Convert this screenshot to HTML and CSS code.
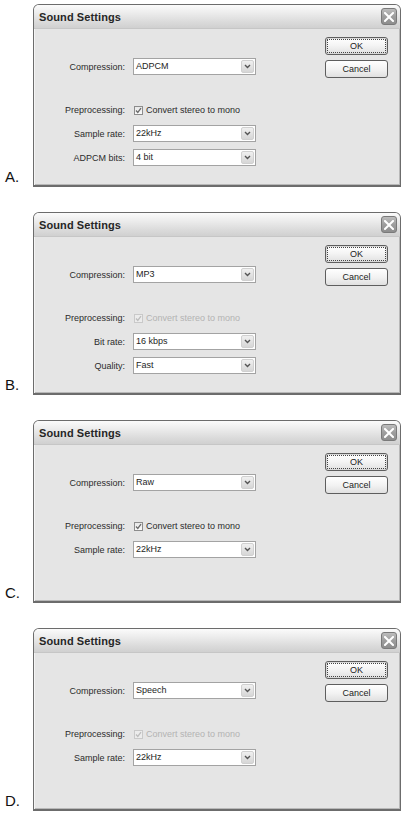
FILE: index.html
```html
<!DOCTYPE html>
<html>
<head>
<meta charset="utf-8">
<link rel="stylesheet" href="styles.css">
</head>
<body>
<div class="page">

  <div class="item">
    <div class="letter">A.</div>
    <div class="dialog">
      <div class="titlebar">
        <span class="title">Sound Settings</span>
        <span class="close"><svg width="10" height="10" viewBox="0 0 10 10"><path d="M1 1L9 9M9 1L1 9" stroke="#fff" stroke-width="2" stroke-linecap="square"/></svg></span>
      </div>
      <div class="body">
        <div class="form">
          <div class="row r1"><span class="lbl">Compression:</span><div class="select"><span class="val">ADPCM</span><span class="arrow"><svg width="7" height="5" viewBox="0 0 7 5"><path d="M1 1L3.5 3.5L6 1" fill="none" stroke="#555" stroke-width="1.4"/></svg></span></div></div>
          <div class="row r2"><span class="lbl">Preprocessing:</span><span class="check"><span class="box"><svg width="7" height="7" viewBox="0 0 7 7"><path d="M1 3.5L2.8 5.5L6 1.2" fill="none" stroke="#6a6a6a" stroke-width="1.3"/></svg></span><span class="ctext">Convert stereo to mono</span></span></div>
          <div class="row r3"><span class="lbl">Sample rate:</span><div class="select"><span class="val">22kHz</span><span class="arrow"><svg width="7" height="5" viewBox="0 0 7 5"><path d="M1 1L3.5 3.5L6 1" fill="none" stroke="#555" stroke-width="1.4"/></svg></span></div></div>
          <div class="row r4"><span class="lbl">ADPCM bits:</span><div class="select"><span class="val">4 bit</span><span class="arrow"><svg width="7" height="5" viewBox="0 0 7 5"><path d="M1 1L3.5 3.5L6 1" fill="none" stroke="#555" stroke-width="1.4"/></svg></span></div></div>
        </div>
        <div class="buttons">
          <span class="btn default">OK</span>
          <span class="btn">Cancel</span>
        </div>
      </div>
    </div>
  </div>

  <div class="item">
    <div class="letter">B.</div>
    <div class="dialog">
      <div class="titlebar">
        <span class="title">Sound Settings</span>
        <span class="close"><svg width="10" height="10" viewBox="0 0 10 10"><path d="M1 1L9 9M9 1L1 9" stroke="#fff" stroke-width="2" stroke-linecap="square"/></svg></span>
      </div>
      <div class="body">
        <div class="form">
          <div class="row r1"><span class="lbl">Compression:</span><div class="select"><span class="val">MP3</span><span class="arrow"><svg width="7" height="5" viewBox="0 0 7 5"><path d="M1 1L3.5 3.5L6 1" fill="none" stroke="#555" stroke-width="1.4"/></svg></span></div></div>
          <div class="row r2"><span class="lbl">Preprocessing:</span><span class="check disabled"><span class="box"><svg width="7" height="7" viewBox="0 0 7 7"><path d="M1 3.5L2.8 5.5L6 1.2" fill="none" stroke="#bdbdbd" stroke-width="1.3"/></svg></span><span class="ctext">Convert stereo to mono</span></span></div>
          <div class="row r3"><span class="lbl">Bit rate:</span><div class="select"><span class="val">16 kbps</span><span class="arrow"><svg width="7" height="5" viewBox="0 0 7 5"><path d="M1 1L3.5 3.5L6 1" fill="none" stroke="#555" stroke-width="1.4"/></svg></span></div></div>
          <div class="row r4"><span class="lbl">Quality:</span><div class="select"><span class="val">Fast</span><span class="arrow"><svg width="7" height="5" viewBox="0 0 7 5"><path d="M1 1L3.5 3.5L6 1" fill="none" stroke="#555" stroke-width="1.4"/></svg></span></div></div>
        </div>
        <div class="buttons">
          <span class="btn default">OK</span>
          <span class="btn">Cancel</span>
        </div>
      </div>
    </div>
  </div>

  <div class="item">
    <div class="letter">C.</div>
    <div class="dialog">
      <div class="titlebar">
        <span class="title">Sound Settings</span>
        <span class="close"><svg width="10" height="10" viewBox="0 0 10 10"><path d="M1 1L9 9M9 1L1 9" stroke="#fff" stroke-width="2" stroke-linecap="square"/></svg></span>
      </div>
      <div class="body">
        <div class="form">
          <div class="row r1"><span class="lbl">Compression:</span><div class="select"><span class="val">Raw</span><span class="arrow"><svg width="7" height="5" viewBox="0 0 7 5"><path d="M1 1L3.5 3.5L6 1" fill="none" stroke="#555" stroke-width="1.4"/></svg></span></div></div>
          <div class="row r2"><span class="lbl">Preprocessing:</span><span class="check"><span class="box"><svg width="7" height="7" viewBox="0 0 7 7"><path d="M1 3.5L2.8 5.5L6 1.2" fill="none" stroke="#6a6a6a" stroke-width="1.3"/></svg></span><span class="ctext">Convert stereo to mono</span></span></div>
          <div class="row r3"><span class="lbl">Sample rate:</span><div class="select"><span class="val">22kHz</span><span class="arrow"><svg width="7" height="5" viewBox="0 0 7 5"><path d="M1 1L3.5 3.5L6 1" fill="none" stroke="#555" stroke-width="1.4"/></svg></span></div></div>
        </div>
        <div class="buttons">
          <span class="btn default">OK</span>
          <span class="btn">Cancel</span>
        </div>
      </div>
    </div>
  </div>

  <div class="item">
    <div class="letter">D.</div>
    <div class="dialog">
      <div class="titlebar">
        <span class="title">Sound Settings</span>
        <span class="close"><svg width="10" height="10" viewBox="0 0 10 10"><path d="M1 1L9 9M9 1L1 9" stroke="#fff" stroke-width="2" stroke-linecap="square"/></svg></span>
      </div>
      <div class="body">
        <div class="form">
          <div class="row r1"><span class="lbl">Compression:</span><div class="select"><span class="val">Speech</span><span class="arrow"><svg width="7" height="5" viewBox="0 0 7 5"><path d="M1 1L3.5 3.5L6 1" fill="none" stroke="#555" stroke-width="1.4"/></svg></span></div></div>
          <div class="row r2"><span class="lbl">Preprocessing:</span><span class="check disabled"><span class="box"><svg width="7" height="7" viewBox="0 0 7 7"><path d="M1 3.5L2.8 5.5L6 1.2" fill="none" stroke="#bdbdbd" stroke-width="1.3"/></svg></span><span class="ctext">Convert stereo to mono</span></span></div>
          <div class="row r3"><span class="lbl">Sample rate:</span><div class="select"><span class="val">22kHz</span><span class="arrow"><svg width="7" height="5" viewBox="0 0 7 5"><path d="M1 1L3.5 3.5L6 1" fill="none" stroke="#555" stroke-width="1.4"/></svg></span></div></div>
        </div>
        <div class="buttons">
          <span class="btn default">OK</span>
          <span class="btn">Cancel</span>
        </div>
      </div>
    </div>
  </div>

</div>
</body>
</html>
```
FILE: styles.css
```css
body {
  margin: 0;
  background: #fff;
  font-family: "Liberation Sans", Arial, sans-serif;
}
.page {
  display: flex;
  flex-direction: column;
  gap: 25px;
  padding-top: 4px;
}
.item {
  display: flex;
  align-items: flex-end;
}
.letter {
  width: 28px;
  padding-left: 5px;
  font-size: 15px;
  line-height: 15px;
  margin-bottom: 3px;
  color: #111;
}
.dialog {
  width: 368px;
  height: 183px;
  box-sizing: border-box;
  border: 1px solid #6c6c6c;
  border-bottom-width: 2px;
  border-radius: 6px 6px 0 0;
  background: #e5e5e5;
  display: flex;
  flex-direction: column;
  overflow: hidden;
  box-shadow: inset 1px 0 0 #f4f4f4, inset -1px 0 0 #b8b8b8, inset 0 -1px 0 #b8b8b8;
}
.titlebar {
  height: 24px;
  box-sizing: border-box;
  flex: none;
  display: flex;
  align-items: center;
  justify-content: space-between;
  padding: 0 3px 0 5px;
  background: linear-gradient(#fbfbfb, #ececec 35%, #dadada 75%, #d0d0d0);
  border-bottom: 1px solid #c6c6c6;
}
.title {
  font-weight: bold;
  font-size: 11px;
  color: #262626;
  letter-spacing: 0.1px;
}
.close {
  width: 16px;
  height: 17px;
  box-sizing: border-box;
  border: 1px solid #7a7a7a;
  border-radius: 3px;
  background: linear-gradient(#bdbdbd, #9e9e9e 50%, #8e8e8e);
  display: flex;
  align-items: center;
  justify-content: center;
}
.body {
  flex: 1;
  display: flex;
  justify-content: space-between;
  padding: 8px 12px 0 0;
}
.form {
  display: flex;
  flex-direction: column;
}
.row {
  display: flex;
  align-items: center;
  gap: 8px;
  height: 17px;
}
.r1 { margin-top: 21px; }
.r2 { margin-top: 28px; height: 14px; }
.r3 { margin-top: 8px; }
.r4 { margin-top: 7px; }
.lbl {
  width: 91px;
  text-align: right;
  font-size: 9px;
  color: #2b2b2b;
}
.select {
  width: 123px;
  height: 17px;
  box-sizing: border-box;
  border: 1px solid #a3a3a3;
  background: #fff;
  display: flex;
}
.val {
  flex: 1;
  padding-left: 2px;
  font-size: 9px;
  line-height: 15px;
  color: #1e1e1e;
}
.arrow {
  width: 13px;
  margin: 1px;
  box-sizing: border-box;
  border: 1px solid #d0d0d0;
  border-radius: 2px;
  background: linear-gradient(#f0f0f0, #d6d6d6);
  display: flex;
  align-items: center;
  justify-content: center;
}
.check {
  display: flex;
  align-items: center;
  gap: 3px;
  margin-left: 1px;
}
.box {
  width: 9px;
  height: 9px;
  box-sizing: border-box;
  border: 1px solid #8c8c8c;
  background: linear-gradient(#e8e8e8, #fafafa);
  display: flex;
  align-items: center;
  justify-content: center;
}
.ctext {
  font-size: 9px;
  color: #2b2b2b;
}
.check.disabled .box {
  border-color: #c9c9c9;
  background: #ececec;
}
.check.disabled .ctext {
  color: #b3b3b3;
}
.buttons {
  display: flex;
  flex-direction: column;
  gap: 5px;
}
.btn {
  width: 63px;
  height: 18px;
  box-sizing: border-box;
  border: 1px solid #5e5e5e;
  border-radius: 3px;
  background: linear-gradient(#ffffff, #f3f3f3 50%, #e0e0e0);
  display: flex;
  align-items: center;
  justify-content: center;
  font-size: 9px;
  color: #222;
}
.btn.default {
  outline: 1px dotted #444;
  outline-offset: -3px;
  box-shadow: inset 0 0 0 1px #d8d8d8;
}
```
